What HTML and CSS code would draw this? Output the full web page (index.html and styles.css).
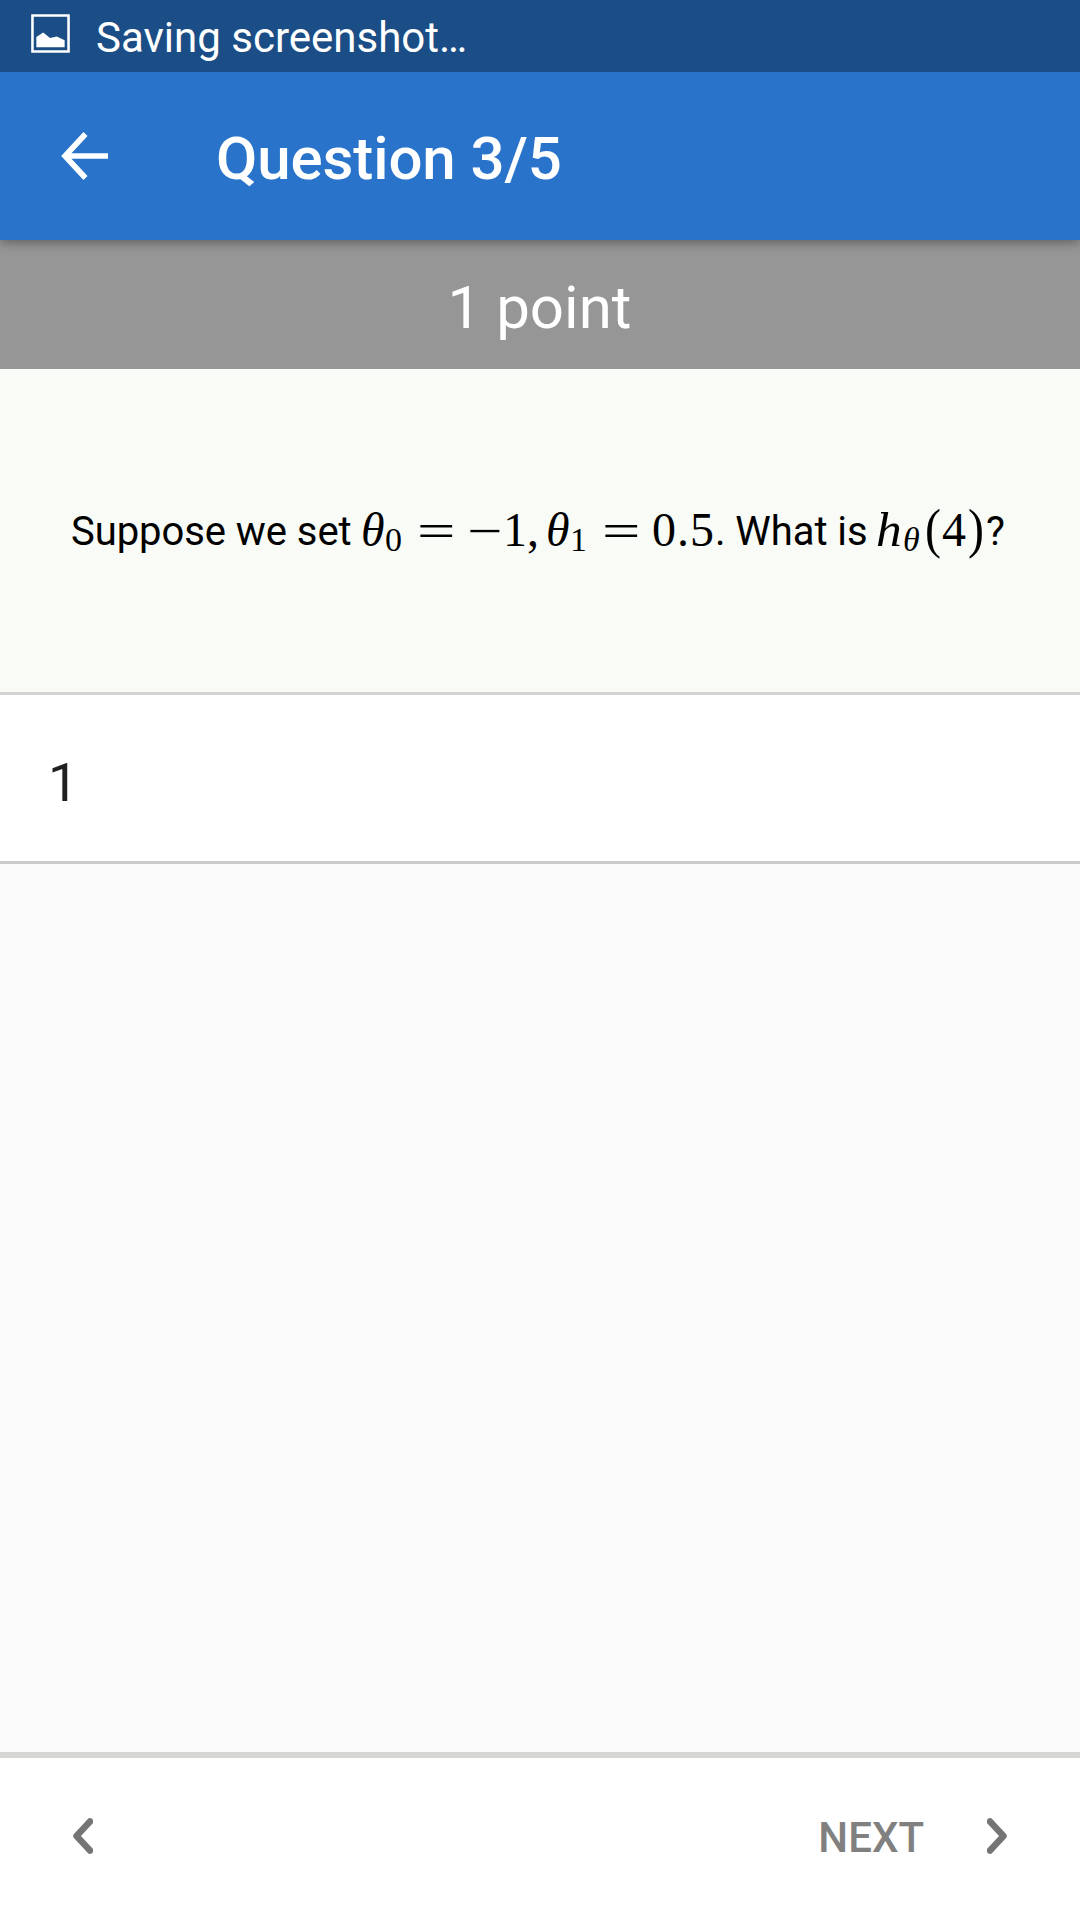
FILE: index.html
```html
<!DOCTYPE html>
<html lang="en">
<head>
<meta charset="utf-8">
<title>Question 3/5</title>
<link rel="stylesheet" href="styles.css">
</head>
<body>
<div class="screen">
  <div class="status">
    <svg class="status-icon" viewBox="0 0 40 40" width="39" height="39"><path d="M1.500 1.500h37v37h-37z" fill="none" stroke="#fff" stroke-width="2.600"/><path d="M5.500 34V23.500L12.500 19l7 5.500 7-1.500 8 4v7z" fill="#fff"/></svg>
    <span class="status-text">Saving screenshot…</span>
  </div>
  <header class="appbar">
    <svg class="back" viewBox="0 0 48 50" width="48" height="50"><path d="M24.500 3 4 25l20.500 22M4 25h43" fill="none" stroke="#fff" stroke-width="5.600"/></svg>
    <h1 class="title">Question 3/5</h1>
  </header>
  <div class="points"><span class="points-text">1 point</span></div>
  <main class="question">
    <p class="line"><span class="words w-a">Suppose we set</span><i class="theta">θ</i><span class="sub s-zero">0</span><span class="rel"><span class="eq">=</span></span><span class="minus"><span class="neg">−</span></span><span class="one">1</span><span class="comma">,</span><i class="theta">θ</i><span class="sub s-one">1</span><span class="rel"><span class="eq">=</span></span><span class="digit">0</span><span class="dot">.</span><span class="digit">5</span><span class="words w-b">. What is</span><i class="h"><span class="h-glyph">h</span></i><i class="sub s-theta">θ</i><span class="paren"><span class="tall">(</span></span><span class="four">4</span><span class="paren close"><span class="tall">)</span></span><span class="words">?</span></p>
  </main>
  <div class="answer"><span class="answer-text">1</span></div>
  <div class="space"></div>
  <footer class="nav">
    <svg class="prev" viewBox="0 0 20 36" width="20" height="36"><path d="M17 3.500 3.500 18 17 32.500" class="chevron"/></svg>
    <span class="next-text">NEXT</span>
    <svg class="next" viewBox="0 0 20 36" width="20" height="36"><path d="M3 3.500 16.500 18 3 32.500" class="chevron"/></svg>
  </footer>
</div>
</body>
</html>
```
FILE: styles.css
```css
* { box-sizing: border-box; }
body { margin: 0; font-family: Roboto, "Liberation Sans", sans-serif; }
.screen { display: flex; flex-direction: column; width: 1080px; height: 1920px; background: #fafafa; overflow: hidden; }
.status { display: flex; align-items: center; height: 72px; padding: 4px 0 0 31px; background: #1b4e86; color: #fff; z-index: 2; }
.status-icon { margin-top: -10px; }
.status-text { margin-left: 26px; font-size: 42px; line-height: 48px; white-space: nowrap; }
.appbar { display: flex; align-items: center; height: 168px; padding-left: 61px; background: #2a73cb; color: #fff; box-shadow: 0 3px 10px 0 rgba(0, 0, 0, .35); z-index: 1; }
.title { margin: 6px 0 0 107px; font-size: 60px; font-weight: 500; line-height: 70px; letter-spacing: -.1px; }
.points { display: flex; justify-content: center; align-items: center; height: 129px; background: #969696; color: #fff; }
.points-text { font-size: 60px; line-height: 70px; padding: 6px 1px 0 0; }
.question { height: 326px; padding: 129px 0 0 71px; background: #f9fbf6; border-bottom: 3px solid #d3d3d3; }
.line { display: flex; align-items: baseline; margin: 0; height: 64px; line-height: 64px; font-family: "Liberation Serif", serif; font-size: 48px; color: #000; white-space: pre; }
.line > * { flex: none; }
.words { font-family: Roboto, sans-serif; font-size: 40px; letter-spacing: -.06px; position: relative; top: -1px; }
.w-a { width: 290px; }
.w-b { width: 161px; }
.theta { width: 24px; }
.sub { font-size: 34px; line-height: 30px; position: relative; top: 5px; }
.s-zero { width: 32px; }
.s-one { width: 32px; }
.s-theta { width: 22px; }
.rel { width: 50px; }
.eq, .neg { display: inline-block; transform-origin: left; }
.eq { transform: translateY(1px) scaleX(1.42); }
.neg { transform: translateY(1px) scaleX(1.3); }
.minus { width: 36px; }
.one { width: 24px; }
.comma { width: 19px; }
.digit { width: 25px; }
.dot { width: 13px; }
.h { width: 27px; }
.h-glyph { display: inline-block; transform: scaleX(1.07); transform-origin: left; }
.paren { width: 17px; }
.four { width: 26px; }
.close { width: 18px; }
.tall { display: inline-block; transform: translateY(-1px) scaleY(1.14); }
.answer { display: flex; align-items: center; height: 169px; padding-left: 48px; background: #fff; border-bottom: 3px solid #cbcbcb; }
.answer-text { padding-top: 9px; font-size: 54px; line-height: 64px; color: #212121; }
.space { flex: 1; }
.nav { display: flex; align-items: center; height: 168px; padding: 0 73px 6px; background: #fff; border-top: 6px solid #d6d7d5; }
.chevron { fill: none; stroke: #757575; stroke-width: 6.500; stroke-linecap: round; stroke-linejoin: round; }
.next-text { margin-left: auto; padding-top: 4px; font-size: 42px; font-weight: 500; line-height: 48px; color: #808080; }
.next { margin-left: 63px; }
```
